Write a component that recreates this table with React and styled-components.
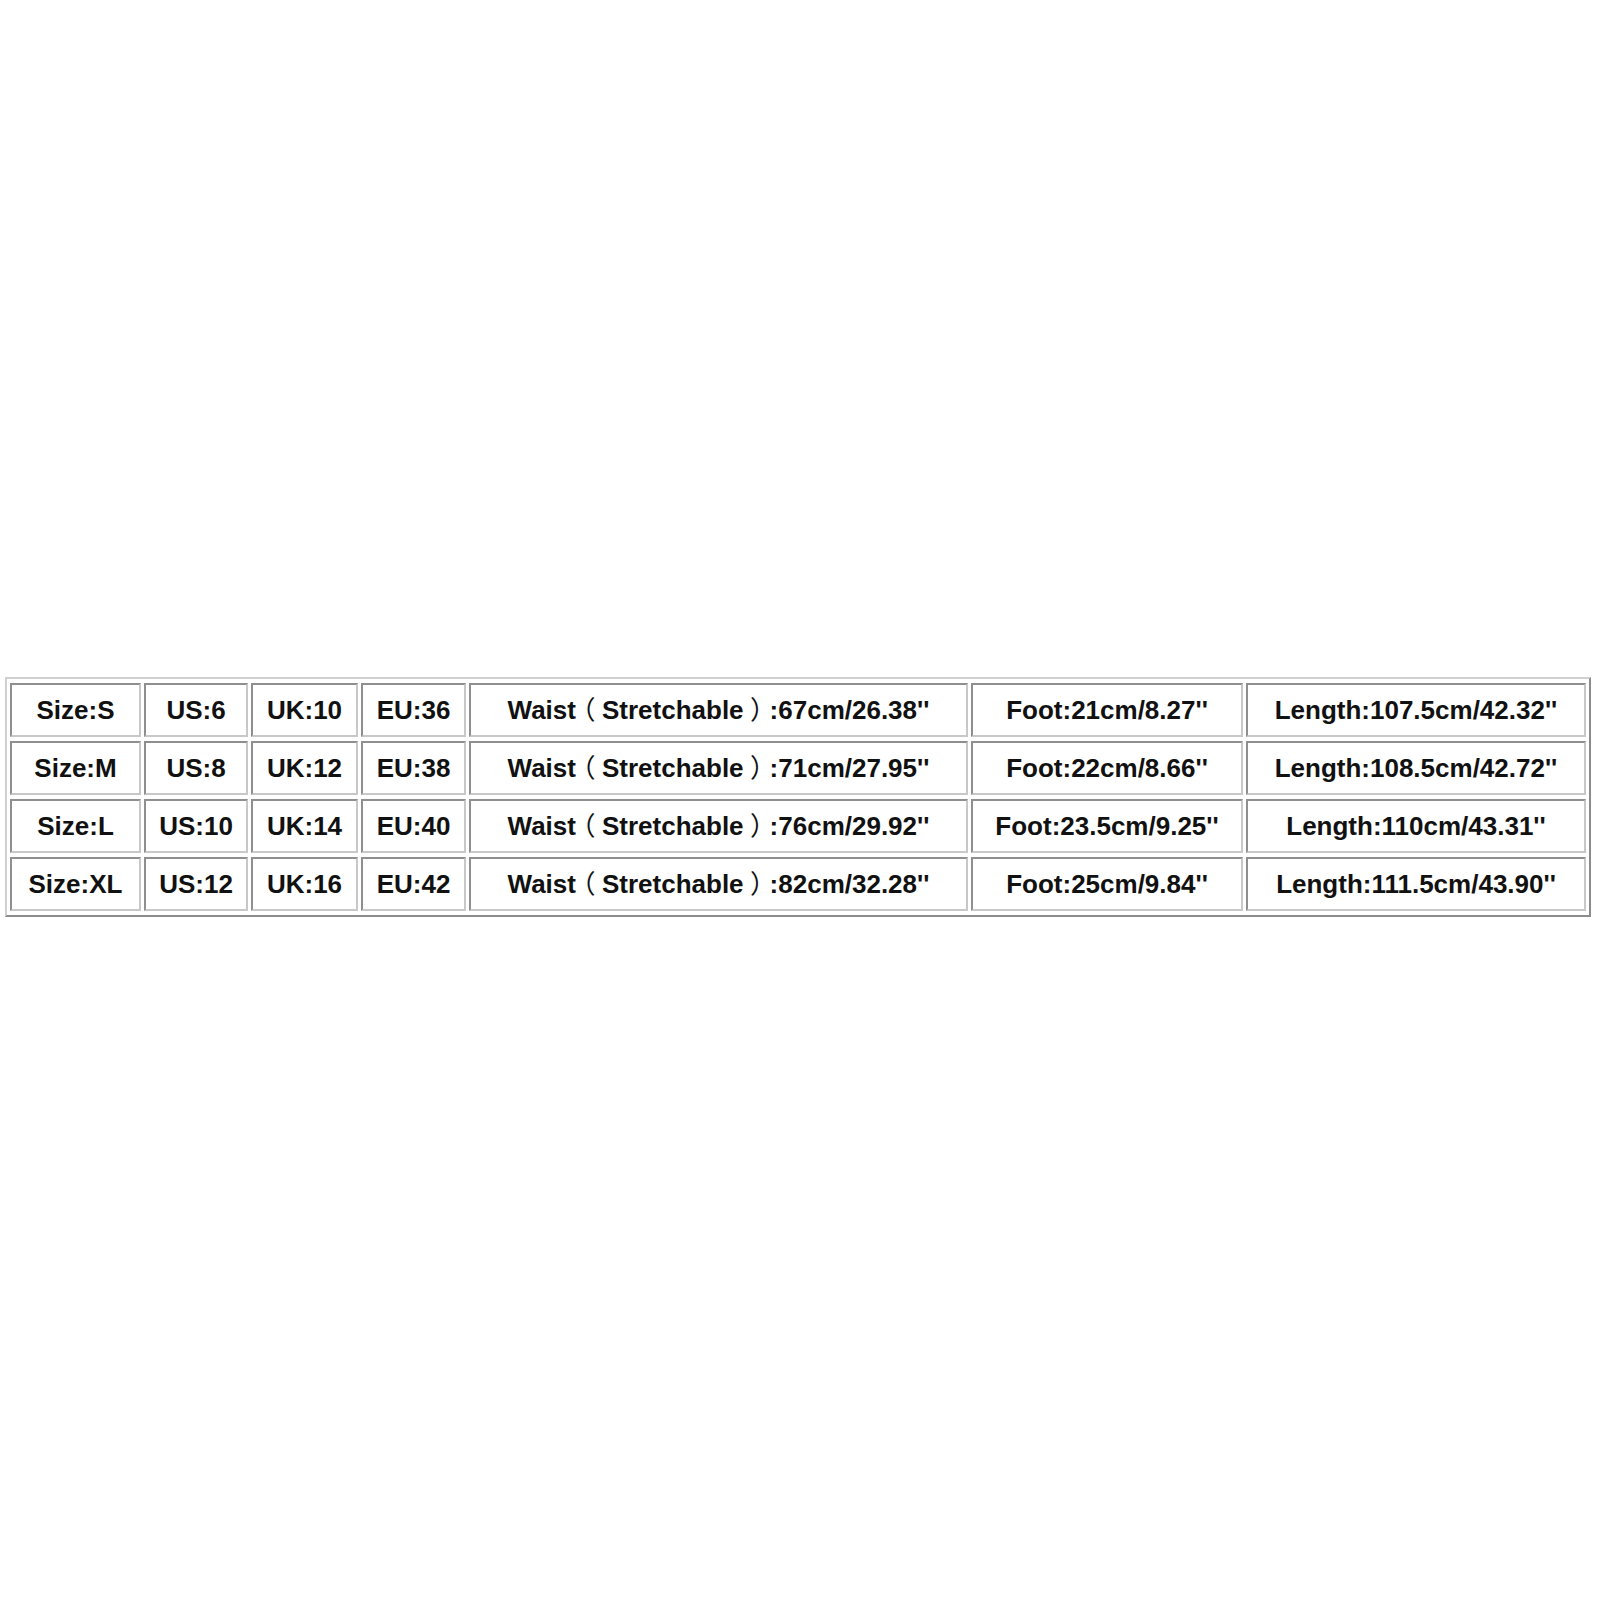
import React from "react";
import styled, { createGlobalStyle } from "styled-components";

const GlobalStyle = createGlobalStyle`
  html, body {
    margin: 0;
    padding: 0;
    background: #ffffff;
  }
`;

const columns = [131, 104, 107, 105, 499, 272, 340];

const rows = [
  ["Size:S", "US:6", "UK:10", "EU:36", ["67cm/26.38''"], "Foot:21cm/8.27''", "Length:107.5cm/42.32''"],
  ["Size:M", "US:8", "UK:12", "EU:38", ["71cm/27.95''"], "Foot:22cm/8.66''", "Length:108.5cm/42.72''"],
  ["Size:L", "US:10", "UK:14", "EU:40", ["76cm/29.92''"], "Foot:23.5cm/9.25''", "Length:110cm/43.31''"],
  ["Size:XL", "US:12", "UK:16", "EU:42", ["82cm/32.28''"], "Foot:25cm/9.84''", "Length:111.5cm/43.90''"],
];

// waist cell holds full-width brackets, drawn centred in their em box
const Waist = ({ value }) => (
  <>
    Waist<Paren>（</Paren>Stretchable<Paren>）</Paren>:{value}
  </>
);

const Page = () => {
  return (
    <Wrapper>
      <GlobalStyle />
      <SizeTable>
        <colgroup>
          {columns.map((w, i) => (
            <Col key={i} $w={w} />
          ))}
        </colgroup>
        <tbody>
          {rows.map((row, r) => (
            <tr key={r}>
              {row.map((text, c) => (
                <Cell key={c}>
                  {Array.isArray(text) ? <Waist value={text[0]} /> : text}
                </Cell>
              ))}
            </tr>
          ))}
        </tbody>
      </SizeTable>
    </Wrapper>
  );
};

const Wrapper = styled.div`
  width: 1600px;
  height: 1600px;
  padding: 677px 0 0 5px;
  box-sizing: border-box;
  background: #ffffff;
`;

const SizeTable = styled.table`
  table-layout: fixed;
  border-collapse: separate;
  border-spacing: 3px 4px;
  border: 2px solid;
  border-color: #d0d0d0 #8c8c8c #8c8c8c #d0d0d0;
  font-family: "Liberation Sans", Arial, sans-serif;
  font-weight: bold;
  font-size: 26px;
  color: #111111;
`;

const Col = styled.col`
  width: ${(p) => p.$w}px;
`;

const Cell = styled.td`
  box-sizing: border-box;
  height: 54px;
  padding: 0;
  border: 2px solid;
  border-color: #8f8f8f #c8c8c8 #c8c8c8 #8f8f8f;
  text-align: center;
  vertical-align: middle;
  white-space: nowrap;
  line-height: 30px;
`;

const Paren = styled.span`
  display: inline-block;
  width: 1em;
  text-align: center;
  font-family: "Noto Sans CJK SC", sans-serif;
  font-feature-settings: "halt";
  font-weight: 400;
  line-height: 1;
`;

export default Page;
